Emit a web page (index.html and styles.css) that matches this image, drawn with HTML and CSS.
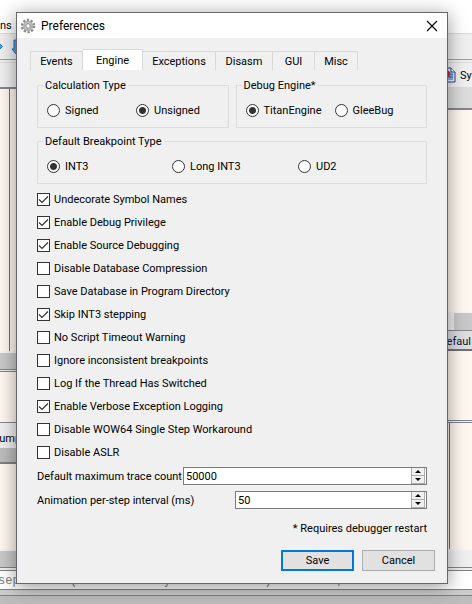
FILE: index.html
```html
<!DOCTYPE html>
<html lang="en">
<head>
<meta charset="utf-8">
<title>Preferences</title>
<link rel="stylesheet" href="styles.css">
</head>
<body>
<div class="app">
  <div class="menubar">ns</div>
  <div class="toolbar">
    <svg width="16" height="16" viewBox="0 0 16 16"><path d="M-6 6H-2V3L2.500 7.500l-4.500 4.500v-3h-4z" fill="#4aa5ea" stroke="#2277bb"/><path d="M14 1h4v8h4l-6 6-4-5h2z" fill="#4aa5ea" stroke="#2277bb"/></svg>
  </div>
  <div class="viewtabs">
    <div class="symtab">
      <svg width="16" height="16" viewBox="0 0 16 16"><path d="M1 1h10l4 4v10H1z" fill="#e8f0ff" stroke="#25477e"/><path d="M11 1v4h4" fill="#fff" stroke="#25477e"/><path d="M6 6h5M6 8h7M5 10h8M5 12h8" stroke="#2f62c8"/><circle cx="6" cy="7" r="4" fill="#b83030"/><path d="M10 7h3M9 10h4" stroke="#2f62c8"/></svg>
      <span>Sy</span>
    </div>
  </div>
  <div class="work">
    <div class="side left">
      <div class="pane lines"></div>
      <div class="scroll"></div>
      <div class="pane short"></div>
      <div class="dumptab">Dump</div>
      <div class="band"></div>
      <div class="pane dump"></div>
      <div class="scroll"></div>
    </div>
    <div class="side right">
      <div class="band light"></div>
      <div class="pane regs"></div>
      <div class="scroll thumb"></div>
      <div class="calltab">efaul</div>
      <div class="pane args"></div>
      <div class="pane stack"></div>
      <div class="scroll pale"></div>
    </div>
  </div>
  <div class="command">separated (like assembly instructions): mov eax, ebx</div>
  <div class="status"></div>
</div>

<main class="dialog">
  <header class="titlebar">
    <svg width="16" height="16" viewBox="0 0 16 16"><circle cx="8" cy="8" r="6" fill="none" stroke="#8a8a8a" stroke-width="2.500" stroke-dasharray="2.200 1.570"/><circle cx="8" cy="8" r="4.200" fill="#ddd" stroke="#b0b0b0" stroke-width="2"/><circle cx="8" cy="8" r="2.500" fill="#ccc" stroke="#999"/><circle cx="8" cy="8" r="1.200" fill="#fff"/></svg>
    <h1>Preferences</h1>
    <button class="close" aria-label="Close"><svg width="12" height="12" viewBox="0 0 12 12"><path d="M1 1l10 10M11 1L1 11" stroke="#000" stroke-width="1.1"/></svg></button>
  </header>
  <nav class="tabs">
    <button class="tab t53">Events</button>
    <button class="tab t60 active">Engine</button>
    <button class="tab t73">Exceptions</button>
    <button class="tab t57">Disasm</button>
    <button class="tab t42">GUI</button>
    <button class="tab t43">Misc</button>
  </nav>
  <form class="body">
    <div class="groups">
      <fieldset>
        <legend>Calculation Type</legend>
        <div class="radios two">
          <label><input type="radio" name="calc">Signed</label>
          <label><input type="radio" name="calc" checked>Unsigned</label>
        </div>
      </fieldset>
      <fieldset>
        <legend>Debug Engine*</legend>
        <div class="radios two">
          <label><input type="radio" name="engine" checked>TitanEngine</label>
          <label><input type="radio" name="engine">GleeBug</label>
        </div>
      </fieldset>
    </div>
    <fieldset>
      <legend>Default Breakpoint Type</legend>
      <div class="radios three">
        <label><input type="radio" name="bp" checked>INT3</label>
        <label><input type="radio" name="bp">Long INT3</label>
        <label><input type="radio" name="bp">UD2</label>
      </div>
    </fieldset>
    <div class="checks">
      <label><input type="checkbox" checked>Undecorate Symbol Names</label>
      <label><input type="checkbox" checked>Enable Debug Privilege</label>
      <label><input type="checkbox" checked>Enable Source Debugging</label>
      <label><input type="checkbox">Disable Database Compression</label>
      <label><input type="checkbox">Save Database in Program Directory</label>
      <label><input type="checkbox" checked>Skip INT3 stepping</label>
      <label><input type="checkbox">No Script Timeout Warning</label>
      <label><input type="checkbox">Ignore inconsistent breakpoints</label>
      <label><input type="checkbox">Log If the Thread Has Switched</label>
      <label><input type="checkbox" checked>Enable Verbose Exception Logging</label>
      <label><input type="checkbox">Disable WOW64 Single Step Workaround</label>
      <label><input type="checkbox">Disable ASLR</label>
    </div>
    <div class="field trace">
      <label for="trace">Default maximum trace count</label>
      <div class="spin">
        <input id="trace" type="text" value="50000">
        <div class="steps"><button type="button" class="up" aria-label="Increase"></button><button type="button" class="down" aria-label="Decrease"></button></div>
      </div>
    </div>
    <div class="field">
      <label for="anim">Animation per-step interval (ms)</label>
      <div class="spin">
        <input id="anim" type="text" value="50">
        <div class="steps"><button type="button" class="up" aria-label="Increase"></button><button type="button" class="down" aria-label="Decrease"></button></div>
      </div>
    </div>
    <p class="note">* Requires debugger restart</p>
  </form>
  <footer class="actions">
    <button class="btn primary">Save</button>
    <button class="btn">Cancel</button>
  </footer>
</main>
</body>
</html>
```
FILE: styles.css
```css
* { box-sizing: border-box; }

body {
  margin: 0;
  min-height: 100vh;
  position: relative;
  overflow: hidden;
  font: 11px/15px Roboto, "Noto Sans", sans-serif;
  color: #000;
}

button, input { font: inherit; color: inherit; }

/* Main window behind the dialog */
.app {
  height: 100vh;
  display: flex;
  flex-direction: column;
  overflow: hidden;
  background: #f0f0f0;
}

.menubar {
  height: 34px;
  padding-top: 18px;
  background: #fff;
  border-bottom: 1px solid #dcdcdc;
}

.toolbar {
  height: 26px;
  padding-top: 5px;
  border-bottom: 1px solid #a0a0a0;
}

.viewtabs {
  height: 25px;
  margin-top: 2px;
  display: flex;
  justify-content: flex-end;
  border-top: 1px solid #dcdcdc;
}

.symtab {
  width: 32px;
  display: flex;
  align-items: center;
  gap: 4px;
}
.symtab svg { flex: none; }

.viewtabs, .work { flex-shrink: 0; }

.work {
  flex: 1 1 0;
  min-height: 0;
  display: flex;
  justify-content: space-between;
}

.side {
  width: 50%;
  display: flex;
  flex-direction: column;
}

.pane { background: #fff8f0; }
.pane.lines {
  flex: 267 1 0;
  border-top: 2px solid #85858f;
  background: linear-gradient(90deg, #fff8f0 9px, #707078 9px 10px, #fff8f0 10px);
}
.scroll {
  height: 19px;
  border-top: 2px solid #f5f5f5;
  border-bottom: 1px solid #85858f;
  background: #c9c9c9;
}
.short {
  flex: 51 1 0;
  margin-top: 1px;
  border: solid #85858f;
  border-width: 1px 0;
}
.dumptab {
  height: 25px;
  padding-top: 8px;
  text-indent: -8px;
}
.band {
  height: 16px;
  background: #bdbdbd;
  border-bottom: 2px solid #808080;
}
.dump { flex: 86 1 0; }

.band.light {
  height: 23px;
  background: #dcdcdc;
  border-bottom-color: #85858f;
}
.regs { flex: 203 1 0; }
.right .scroll { background: #f0f0f0; }
.right .thumb {
  border-top-width: 1px;
  background: linear-gradient(90deg, #f0f0f0 218px, #c9c9c9 218px);
}
.calltab {
  height: 20px;
  padding: 3px 1px 0;
  text-align: right;
  background: #dedede;
  border-bottom: 2px solid #707078;
  color: #001040;
}
.args {
  flex: 69 1 0;
  border-bottom: 1px solid #85858f;
}
.pane.stack {
  flex: 127 1 0;
  margin-top: 1px;
  border-top: 1px solid #85858f;
  background: linear-gradient(90deg, #fff8f0 213px, #707078 213px 214px, #fff8f0 214px);
}

.command {
  height: 20px;
  margin-top: 2px;
  padding-top: 3px;
  overflow: hidden;
  white-space: nowrap;
  text-indent: -2px;
  font: 12px/14px "Liberation Mono", monospace;
  color: #808080;
  background: #fff;
  border: solid #808080;
  border-width: 1px 0;
}
.status {
  height: 14px;
  background: linear-gradient(#cdcdcd 5px, #808080 5px 6px, #bdbdbd 6px);
}

/* Dialog window */
.dialog {
  position: absolute;
  inset: 12px 24px 20px 16px;
  display: flex;
  flex-direction: column;
  background: #f0f0f0;
  border: 1px solid #64686c;
  box-shadow: 0 3px 18px rgba(0, 0, 0, .42);
}

.titlebar {
  height: 25px;
  flex: none;
  display: flex;
  align-items: center;
  gap: 5px;
  padding: 0 9px 0 3px;
  background: #fff;
}
.titlebar h1 {
  flex: 1;
  margin: 0;
  font: 12px/14px Roboto, sans-serif;
}
.close {
  display: flex;
  padding: 0;
  border: 0;
  background: none;
}

.tabs {
  display: flex;
  align-items: flex-end;
  height: 32px;
  flex: none;
  padding-left: 13px;
}
.tab {
  height: 19px;
  padding: 1px 0 0;
  background: none;
  border: 1px solid #d9d9d9;
  border-width: 1px 1px 0 0;
}
.tab:first-child { border-left-width: 1px; }
.tab.active {
  height: 21px;
  background: #fff;
}
.t42 { width: 42px; }
.t43 { width: 43px; }
.t53 { width: 53px; }
.t57 { width: 57px; }
.t60 { width: 60px; }
.t73 { width: 73px; }

.body { padding: 8px 20px 0; }

.groups {
  display: grid;
  grid-template-columns: 1fr 1fr;
  gap: 7px;
  margin-bottom: 6px;
}

fieldset {
  min-width: 0;
  height: 50px;
  margin: 0;
  padding: 0 0 0 9px;
  border: 1px solid #dcdcdc;
}
legend {
  margin-left: -4px;
  padding: 0 2px;
}

.radios { display: grid; padding-top: 10px; }
.two { grid-template-columns: 89px 1fr; }
.three { grid-template-columns: 125px 126px 1fr; }

label { white-space: nowrap; }
.radios label, .checks label {
  display: flex;
  align-items: center;
  gap: 4px;
}
.radios label { gap: 5px; }

input[type="radio"], input[type="checkbox"] {
  appearance: none;
  flex: none;
  width: 13px;
  height: 13px;
  margin: 0;
  border: 1px solid #333;
  background: #fff;
}
input[type="radio"] { border-radius: 50%; }
input[type="radio"]:checked {
  background: radial-gradient(circle, #333 3px, #fff 4px);
}
input[type="checkbox"]:checked {
  background: #fff url("data:image/svg+xml,%3Csvg xmlns='http://www.w3.org/2000/svg' viewBox='0 0 11 11'%3E%3Cpath d='M1 5.5l3 3 6-6' fill='none' stroke='%23333' stroke-width='1.2'/%3E%3C/svg%3E");
}

.checks { padding-top: 4px; }
.checks label { height: 23px; }

.field {
  display: grid;
  grid-template-columns: 198px 1fr;
  align-items: center;
  margin-top: 6px;
}
.field.trace {
  grid-template-columns: 146px 1fr;
  margin-top: 3px;
}

.spin {
  display: flex;
  height: 18px;
  background: #fff;
  border: 1px solid #7a7a7a;
}
.spin input {
  flex: 1;
  min-width: 0;
  padding: 0 2px;
  border: 0;
  background: none;
  outline: 0;
}
.steps {
  width: 14px;
  margin-right: 1px;
  display: flex;
  flex-direction: column;
}
.steps button {
  flex: 1;
  padding: 0;
  display: flex;
  align-items: center;
  justify-content: center;
  background: #f0f0f0;
  border: 1px solid #acacac;
  border-top: 0;
}
.steps button::before {
  content: "";
  border: solid transparent;
  border-width: 0 3px;
}
.steps .up::before { border-bottom: 3px solid #000; }
.steps .down::before { border-top: 3px solid #000; }

.note {
  margin: 12px 0 0;
  text-align: right;
}

.actions {
  display: flex;
  justify-content: flex-end;
  gap: 8px;
  margin-top: auto;
  padding: 0 12px 12px;
}
.btn {
  width: 73px;
  height: 21px;
  padding: 0;
  background: #e1e1e1;
  border: 1px solid #adadad;
}
.btn.primary { border: 2px solid #0078d7; }
```
